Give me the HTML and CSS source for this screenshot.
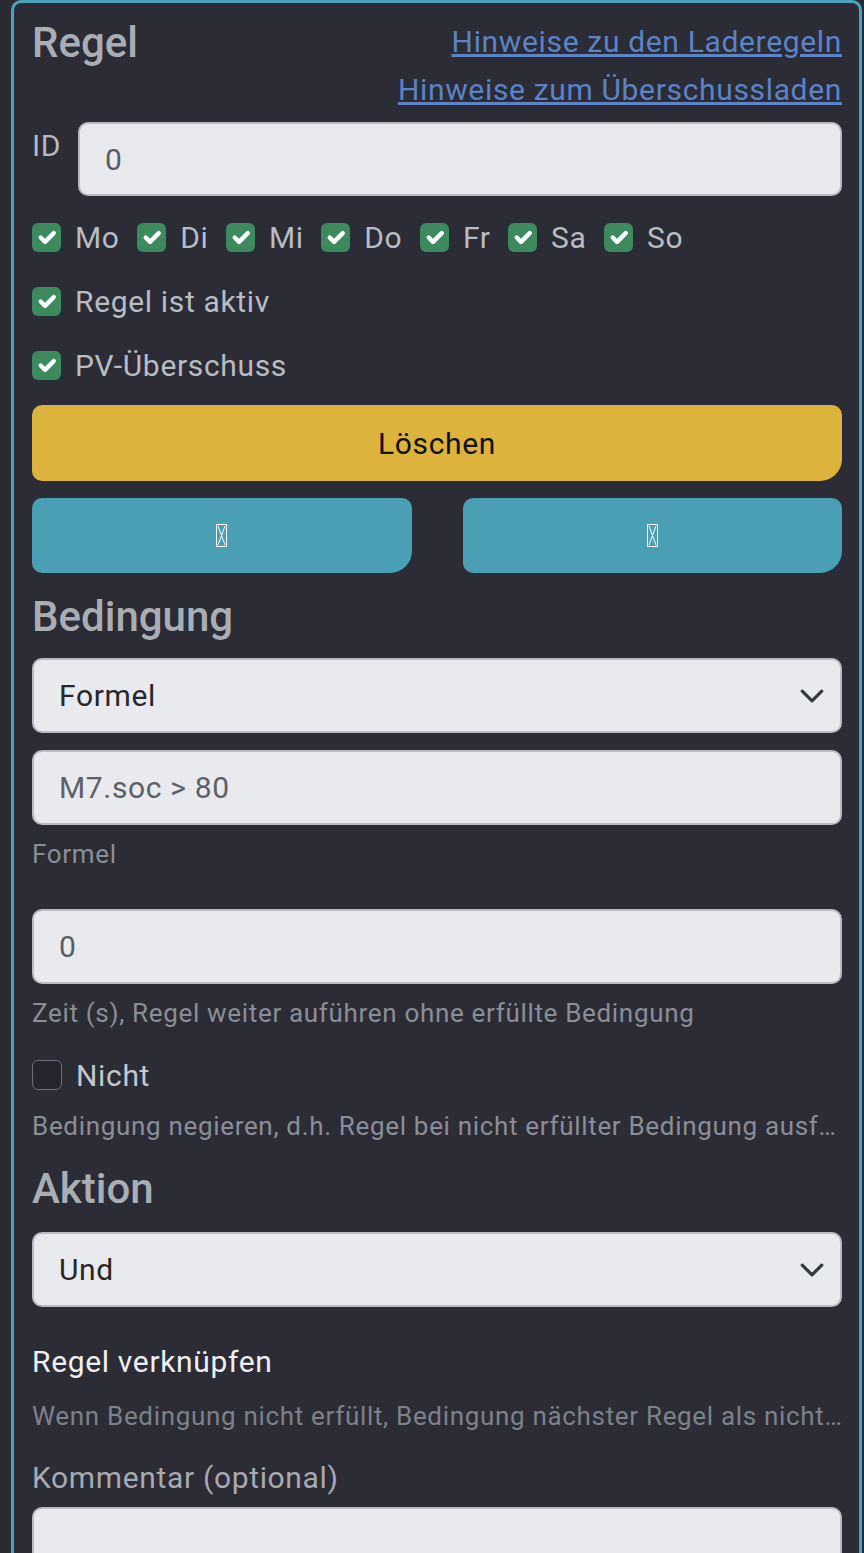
FILE: index.html
```html
<!DOCTYPE html>
<html>
<head>
    <title>Regel</title>
    <link rel="stylesheet" href="styles.css">
</head>
<body>
    <div class="rule-card">
        <div class="rule-head">
            <h4 class="section-title">Regel</h4>
            <div class="hints">
                <a href="#">Hinweise zu den Laderegeln</a>
                <a href="#">Hinweise zum Überschussladen</a>
            </div>
        </div>

        <div class="id-row">
            <label class="id-label" for="rule-id">ID</label>
            <input class="field" id="rule-id" type="text" value="0">
        </div>

        <div class="days">
            <label class="check day"><span class="box on"><svg viewBox="0 0 20 20"><path d="m6 10 3 3 6-6"/></svg></span>Mo</label>
            <label class="check day"><span class="box on"><svg viewBox="0 0 20 20"><path d="m6 10 3 3 6-6"/></svg></span>Di</label>
            <label class="check day"><span class="box on"><svg viewBox="0 0 20 20"><path d="m6 10 3 3 6-6"/></svg></span>Mi</label>
            <label class="check day"><span class="box on"><svg viewBox="0 0 20 20"><path d="m6 10 3 3 6-6"/></svg></span>Do</label>
            <label class="check day"><span class="box on"><svg viewBox="0 0 20 20"><path d="m6 10 3 3 6-6"/></svg></span>Fr</label>
            <label class="check day"><span class="box on"><svg viewBox="0 0 20 20"><path d="m6 10 3 3 6-6"/></svg></span>Sa</label>
            <label class="check day"><span class="box on"><svg viewBox="0 0 20 20"><path d="m6 10 3 3 6-6"/></svg></span>So</label>
        </div>

        <div class="check-row">
            <label class="check"><span class="box on"><svg viewBox="0 0 20 20"><path d="m6 10 3 3 6-6"/></svg></span>Regel ist aktiv</label>
        </div>
        <div class="check-row">
            <label class="check"><span class="box on"><svg viewBox="0 0 20 20"><path d="m6 10 3 3 6-6"/></svg></span>PV-Überschuss</label>
        </div>

        <button class="btn btn-delete" type="button">Löschen</button>

        <div class="btn-row">
            <button class="btn btn-icon" type="button">
                <svg class="tofu" viewBox="0 0 11 23"><rect x="0.5" y="0.5" width="10" height="22"/><path d="M2 2 9 21M9 2 2 21"/></svg>
            </button>
            <button class="btn btn-icon" type="button">
                <svg class="tofu" viewBox="0 0 11 23"><rect x="0.5" y="0.5" width="10" height="22"/><path d="M2 2 9 21M9 2 2 21"/></svg>
            </button>
        </div>

        <h4 class="section-title spaced">Bedingung</h4>
        <div class="select">
            <span>Formel</span>
            <svg class="chevron" viewBox="0 0 16 16"><path d="m2 5 6 6 6-6"/></svg>
        </div>
        <input class="field formula" type="text" value="M7.soc &gt; 80">
        <div class="help">Formel</div>

        <input class="field delay" type="text" value="0">
        <div class="help">Zeit (s), Regel weiter auführen ohne erfüllte Bedingung</div>

        <div class="check-row">
            <label class="check light"><span class="box off"></span>Nicht</label>
        </div>
        <div class="help cut">Bedingung negieren, d.h. Regel bei nicht erfüllter Bedingung ausführen</div>

        <h4 class="section-title action">Aktion</h4>
        <div class="select">
            <span>Und</span>
            <svg class="chevron" viewBox="0 0 16 16"><path d="m2 5 6 6 6-6"/></svg>
        </div>

        <div class="link-title">Regel verknüpfen</div>
        <div class="help cut dim">Wenn Bedingung nicht erfüllt, Bedingung nächster Regel als nicht erfüllt werten</div>

        <label class="comment-label" for="comment">Kommentar (optional)</label>
        <textarea class="field comment" id="comment"></textarea>
    </div>
</body>
</html>
```

FILE: styles.css
```css
:root {
    --card-bg: #2c2c36;
    --teal: #4ba3ba;
    --field-bg: #e9eaee;
    --field-border: #b9bbc1;
    --green: #3c8a5e;
    --muted: #8a8e96;
}

* {
    margin: 0;
    padding: 0;
    box-sizing: border-box;
    font-family: Roboto, 'Liberation Sans', sans-serif;
    letter-spacing: 0.022em;
}

body {
    background: #2a2b32;
    padding: 0 2px 0 11px;
}

.rule-card {
    background: var(--card-bg);
    border: 3px solid var(--teal);
    border-bottom: none;
    border-radius: 10px 10px 0 0;
    padding: 15px 17px 40px 18px;
    min-height: 1553px;
}

.rule-head {
    display: flex;
    justify-content: space-between;
    align-items: flex-start;
}

.section-title {
    font-size: 42px;
    font-weight: 500;
    line-height: 50px;
    letter-spacing: 0;
    color: #a9aeb5;
}

.section-title.spaced {
    margin-top: 19px;
}

.section-title.action {
    margin-top: 18px;
}

.hints {
    display: flex;
    flex-direction: column;
    align-items: flex-end;
}

.hints a {
    font-size: 30px;
    line-height: 48px;
    color: #5b83c6;
    text-decoration: underline;
}

.id-row {
    display: flex;
    align-items: flex-start;
    margin-top: 8px;
}

.id-label {
    flex: 0 0 46px;
    font-size: 30px;
    line-height: 45px;
    padding-top: 1px;
    color: #b5b9c0;
}

.field {
    display: block;
    width: 100%;
    height: 75px;
    padding: 0 25px;
    font-size: 30px;
    color: #5a5d66;
    background: var(--field-bg);
    border: 2px solid var(--field-border);
    border-radius: 10px;
    outline: none;
}

.id-row .field {
    height: 74px;
}

.days,
.check-row {
    display: flex;
    align-items: center;
    height: 44px;
}

.days {
    margin-top: 19px;
}

.check-row {
    margin-top: 20px;
}

.check {
    display: flex;
    align-items: center;
    gap: 14px;
    font-size: 30px;
    color: #b8bcc3;
}

.check.day {
    margin-right: 17.5px;
}

.check.light {
    color: #c4c7cc;
}

.box {
    flex: none;
    display: flex;
    align-items: center;
    justify-content: center;
    width: 29px;
    height: 29px;
    border-radius: 6px;
}

.box.on {
    background: var(--green);
}

.box.on svg {
    width: 29px;
    height: 29px;
    fill: none;
    stroke: #fff;
    stroke-width: 3;
    stroke-linecap: round;
    stroke-linejoin: round;
}

.box.off {
    width: 30px;
    height: 30px;
    background: #25262c;
    border: 1px solid #6d7078;
}

.btn {
    display: flex;
    align-items: center;
    justify-content: center;
    width: 100%;
    border: none;
    border-radius: 10px 10px 22px 10px;
    cursor: pointer;
}

.btn-delete {
    margin-top: 18px;
    height: 76px;
    background: #dcb43d;
    color: #111;
    font-size: 30px;
}

.btn-row {
    display: grid;
    grid-template-columns: 1fr 1fr;
    column-gap: 51px;
    margin-top: 17px;
}

.btn-icon {
    height: 75px;
    background: #4a9fb4;
}

.tofu {
    width: 11px;
    height: 23px;
    fill: none;
    stroke: #fff;
    stroke-width: 1;
}

.select {
    display: flex;
    align-items: center;
    justify-content: space-between;
    height: 75px;
    margin-top: 16px;
    padding: 0 15px 0 25px;
    font-size: 30px;
    color: #26272b;
    background: var(--field-bg);
    border: 2px solid var(--field-border);
    border-radius: 10px;
}

.section-title.action + .select {
    margin-top: 18px;
}

.chevron {
    width: 26px;
    height: 26px;
    fill: none;
    stroke: #343a40;
    stroke-width: 2;
    stroke-linecap: round;
    stroke-linejoin: round;
}

.formula {
    margin-top: 17px;
    color: #5d6069;
}

.delay {
    margin-top: 35px;
}

.help {
    margin-top: 10px;
    font-size: 26px;
    line-height: 39px;
    letter-spacing: 0.026em;
    color: var(--muted);
}

.help.cut {
    white-space: nowrap;
    overflow: hidden;
    text-overflow: ellipsis;
}

.help.dim {
    margin-top: 13px;
    color: #7d8189;
}

.link-title {
    margin-top: 32px;
    font-size: 30px;
    line-height: 45px;
    color: #f0f0f2;
}

.comment-label {
    display: block;
    margin-top: 19px;
    font-size: 30px;
    line-height: 45px;
    color: #a6aab1;
}

.comment {
    margin-top: 7px;
    height: 110px;
    resize: none;
}
```
